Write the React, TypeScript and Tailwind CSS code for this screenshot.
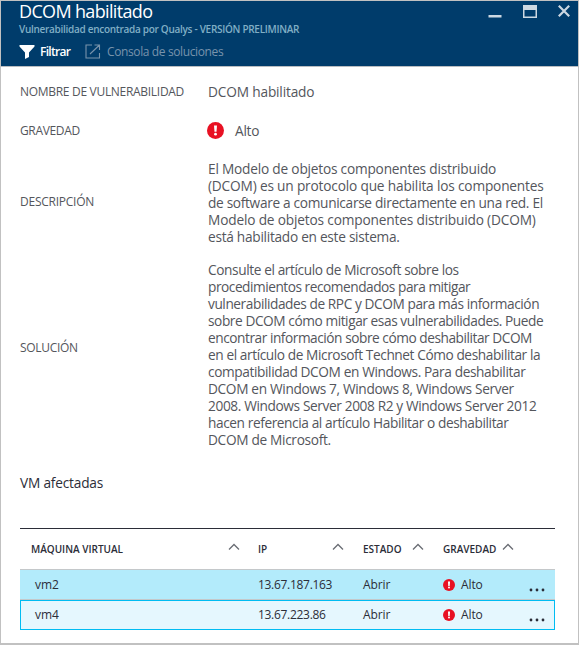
import React from "react";

type Line = { text: string; tracking: string };

const description: Line[] = [
  { text: "El Modelo de objetos componentes distribuido", tracking: "tracking-[-0.21px]" },
  { text: "(DCOM) es un protocolo que habilita los componentes", tracking: "tracking-[-0.18px]" },
  { text: "de software a comunicarse directamente en una red. El", tracking: "tracking-[-0.32px]" },
  { text: "Modelo de objetos componentes distribuido (DCOM)", tracking: "tracking-[-0.17px]" },
  { text: "está habilitado en este sistema.", tracking: "tracking-[-0.28px]" },
];

const solution: Line[] = [
  { text: "Consulte el artículo de Microsoft sobre los", tracking: "tracking-[-0.4px]" },
  { text: "procedimientos recomendados para mitigar", tracking: "tracking-[-0.47px]" },
  { text: "vulnerabilidades de RPC y DCOM para más información", tracking: "tracking-[-0.43px]" },
  { text: "sobre DCOM cómo mitigar esas vulnerabilidades. Puede", tracking: "tracking-[-0.43px]" },
  { text: "encontrar información sobre cómo deshabilitar DCOM", tracking: "tracking-[-0.46px]" },
  { text: "en el artículo de Microsoft Technet Cómo deshabilitar la", tracking: "tracking-[-0.42px]" },
  { text: "compatibilidad DCOM en Windows. Para deshabilitar", tracking: "tracking-[-0.39px]" },
  { text: "DCOM en Windows 7, Windows 8, Windows Server", tracking: "tracking-[-0.34px]" },
  { text: "2008. Windows Server 2008 R2 y Windows Server 2012", tracking: "tracking-[-0.38px]" },
  { text: "hacen referencia al artículo Habilitar o deshabilitar", tracking: "tracking-[-0.41px]" },
  { text: "DCOM de Microsoft.", tracking: "tracking-[-0.33px]" },
];

function Alert({ className }: { className: string }) {
  return (
    <svg viewBox="0 0 17 17" className={className}>
      <circle cx="8.5" cy="8.5" r="8.5" fill="#e81123" />
      <path d="M7 3.6h3l-.5 6.2h-2z" fill="#fff" />
      <circle cx="8.5" cy="12.2" r="1.4" fill="#fff" />
    </svg>
  );
}

function Caret() {
  return (
    <svg viewBox="0 0 12 8" className="mb-[5px] h-2 w-3 shrink-0" fill="none" stroke="#6a6d74" strokeWidth="1.3">
      <path d="M1 6.5 6 1.5 11 6.5" />
    </svg>
  );
}

function Dots() {
  return (
    <svg viewBox="0 0 16 4" className="h-1 w-4" fill="#2b2d38">
      <circle cx="2" cy="2" r="1.4" />
      <circle cx="8" cy="2" r="1.4" />
      <circle cx="14" cy="2" r="1.4" />
    </svg>
  );
}

function Lines({ lines }: { lines: Line[] }) {
  return (
    <p className="text-[13.7px] leading-[17px]">
      {lines.map((line) => (
        <span key={line.text} className={line.tracking}>
          {line.text}
          <br />
        </span>
      ))}
    </p>
  );
}

const grid = "grid grid-cols-[228px_105px_80px_74px_48px]";

function Row({ name, ip, selected }: { name: string; ip: string; selected?: boolean }) {
  return (
    <div
      className={
        selected
          ? `${grid} h-[30px] items-center bg-[#e5f7fe] text-[12px] tracking-[-0.1px] outline outline-1 -outline-offset-1 outline-[#00bcf2]`
          : `${grid} h-[30px] items-center border-b border-[#c4c8ca] bg-[#b3ebfb] text-[12px] tracking-[-0.1px]`
      }
    >
      <span className="pl-[15px]">{name}</span>
      <span className="pl-[10px] tracking-[-0.3px]">{ip}</span>
      <span className="pl-[10px]">Abrir</span>
      <span className="flex items-center gap-[6px] pl-[10px]">
        <Alert className="size-[12px]" />
        Alto
      </span>
      <span className="flex justify-end pt-[10px] pr-[10px]">
        <Dots />
      </span>
    </div>
  );
}

export default function App() {
  return (
    <main className="h-[645px] w-[579px] overflow-hidden border border-b-2 border-[#c1c1c1] bg-white font-['Open_Sans','Noto_Sans',sans-serif] whitespace-nowrap text-[#54565c]">
      <header className="flex h-[66px] justify-between border-b border-[#b9bdc1] bg-[#003c6b]">
        <div className="pl-[18px]">
          <h1 className="h-[22px] text-[18px] leading-[21px] tracking-[-0.66px] text-white">DCOM habilitado</h1>
          <p className="h-[13px] text-[10px] leading-[13px] font-semibold tracking-[-0.29px] text-[#80afc5]">
            Vulnerabilidad encontrada por Qualys - VERSIÓN PRELIMINAR
          </p>
          <div className="flex h-[31px] items-center text-[12px]">
            <svg viewBox="0 0 16 14" className="h-[14px] w-4" fill="#fff">
              <path d="M.5 0h15v1.5L10 7.5V12l-4 2V7.500L.5 1.500z" />
            </svg>
            <span className="ml-[5px] w-[45px] pt-px font-semibold tracking-[-0.7px] text-white">Filtrar</span>
            <svg viewBox="0 0 16 15" className="h-[15px] w-4" fill="none" stroke="#7893ab" strokeWidth="1.1">
              <path d="M7 1H1v13h13.500V9M5 10 14.500 1M9.500 1h5v5" />
            </svg>
            <span className="ml-[6px] pt-px tracking-[-0.38px] text-[#7893ab]">Consola de soluciones</span>
          </div>
        </div>
        <div className="flex h-[20px] items-center gap-[21px] pr-[8px]">
          <svg viewBox="0 0 14 14" className="size-[14px]" fill="#ccd8e2">
            <path d="M.5 11h13v2.500H.5z" />
          </svg>
          <svg viewBox="0 0 14 13" className="h-[13px] w-[14px]" fill="#ccd8e2" fillRule="evenodd">
            <path d="M0 0h14v13H0zM1.500 5v6.500h11V5z" />
          </svg>
          <svg viewBox="0 0 12 12" className="size-[12px]" fill="none" stroke="#ccd8e2" strokeWidth="2.2">
            <path d="m.8.8 10.400 10.400M11.200.8.8 11.200" />
          </svg>
        </div>
      </header>

      <section className="grid grid-cols-[188px_1fr] grid-rows-[50px_28px_114px_178px] items-center pl-[19px] text-[12px]">
        <span className="tracking-[-0.3px]">NOMBRE DE VULNERABILIDAD</span>
        <span className="pt-px text-[13.7px] tracking-[-0.17px]">DCOM habilitado</span>
        <span className="tracking-[-0.35px]">GRAVEDAD</span>
        <span className="flex items-center gap-[11px] text-[13.7px] tracking-[-0.27px]">
          <Alert className="-ml-px size-[17px]" />
          Alto
        </span>
        <span className="tracking-[-0.25px]">DESCRIPCIÓN</span>
        <Lines lines={description} />
        <span className="tracking-[-0.3px]">SOLUCIÓN</span>
        <div className="pt-[13px]">
          <Lines lines={solution} />
        </div>
      </section>

      <section className="mx-[19px] w-[535px] text-[#2b2d38]">
        <h2 className="h-[91px] pt-[37px] text-[13.7px] leading-[17px] tracking-[-0.2px]">VM afectadas</h2>
        <div className={`${grid} h-[42px] items-center border-t border-b border-t-[#2b2d38] border-b-[#c4c8ca] text-[10px] font-semibold`}>
          <span className="flex items-center justify-between pr-[8px] pl-[11px]">
            MÁQUINA VIRTUAL <Caret />
          </span>
          <span className="flex items-center justify-between pr-[9px] pl-[10px]">
            IP <Caret />
          </span>
          <span className="flex items-center justify-between pr-[9px] pl-[10px]">
            ESTADO <Caret />
          </span>
          <span className="flex items-center gap-[6px] pl-[10px]">
            GRAVEDAD <Caret />
          </span>
        </div>
        <Row name="vm2" ip="13.67.187.163" />
        <Row name="vm4" ip="13.67.223.86" selected />
      </section>
    </main>
  );
}
